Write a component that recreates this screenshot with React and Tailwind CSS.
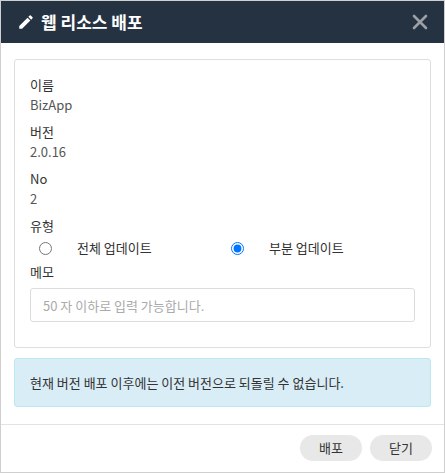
import React, { useState } from 'react';

const App = () => {
    const [type, setType] = useState('partial');
    const font = { fontFamily: '"Noto Sans CJK KR", "Noto Sans", sans-serif' };

    return (
        <div className="w-[445px] h-[473px] border border-[#cfcfcf] bg-white flex flex-col text-[13px] text-[#333]" style={font}>
            <div className="h-[42px] bg-[#253241] flex items-center justify-between pl-4 pr-[16px] shrink-0">
                <div className="flex items-center gap-[6px] text-white text-[17px] font-bold">
                    <svg width="18" height="18" viewBox="0 0 24 24" fill="white">
                        <path d="M3 17.25V21h3.75L17.81 9.94l-3.75-3.75L3 17.25zM20.71 7.04a1 1 0 0 0 0-1.41l-2.34-2.34a1 1 0 0 0-1.41 0l-1.83 1.83 3.75 3.75 1.83-1.83z" />
                    </svg>
                    웹 리소스 배포
                </div>
                <svg width="16" height="16" viewBox="0 0 16 16" stroke="#9aa0a6" strokeWidth="2.6" strokeLinecap="round">
                    <path d="M2 2l12 12M14 2L2 14" />
                </svg>
            </div>

            <div className="px-[13px] pt-[16px]">
                <div className="border border-[#dedede] rounded-[3px] px-[15px] pt-[15px] pb-[25px] leading-[20px]">
                    <div>이름</div>
                    <div className="text-[#555] mb-[7px]">BizApp</div>
                    <div>버전</div>
                    <div className="text-[#555] mb-[7px]">2.0.16</div>
                    <div>No</div>
                    <div className="text-[#555] mb-[7px]">2</div>
                    <div>유형</div>
                    <div className="flex items-center h-[24px] pl-[9px]">
                        <label className="flex items-center w-[192px]">
                            <input type="radio" name="t" checked={type === 'full'} onChange={() => setType('full')} className="w-[13px] h-[13px] m-0 mr-[25px]" />
                            전체 업데이트
                        </label>
                        <label className="flex items-center">
                            <input type="radio" name="t" checked={type === 'partial'} onChange={() => setType('partial')} className="w-[13px] h-[13px] m-0 mr-[25px] accent-[#0075ff]" />
                            부분 업데이트
                        </label>
                    </div>
                    <div className="mt-[2px] mb-[6px]">메모</div>
                    <input placeholder="50 자 이하로 입력 가능합니다." className="w-full h-[34px] border border-[#dcdcdc] rounded-[3px] px-[12px] text-[13px] placeholder-[#aaa] outline-none" />
                </div>

                <div className="mt-[10px] h-[49px] bg-[#d9edf7] border border-[#bce8f1] rounded-[3px] flex items-center px-[15px] text-[#333]">
                    현재 버전 배포 이후에는 이전 버전으로 되돌릴 수 없습니다.
                </div>
            </div>

            <div className="mt-auto border-t border-[#e3e3e3] h-[48px] flex items-center justify-end gap-[8px] pr-[12px] pb-[1px]">
                <button className="w-[62px] h-[26px] rounded-full bg-[#e8e8e8] text-[#333]">배포</button>
                <button className="w-[62px] h-[26px] rounded-full bg-[#e8e8e8] text-[#333]">닫기</button>
            </div>
        </div>
    );
};

export default App;
